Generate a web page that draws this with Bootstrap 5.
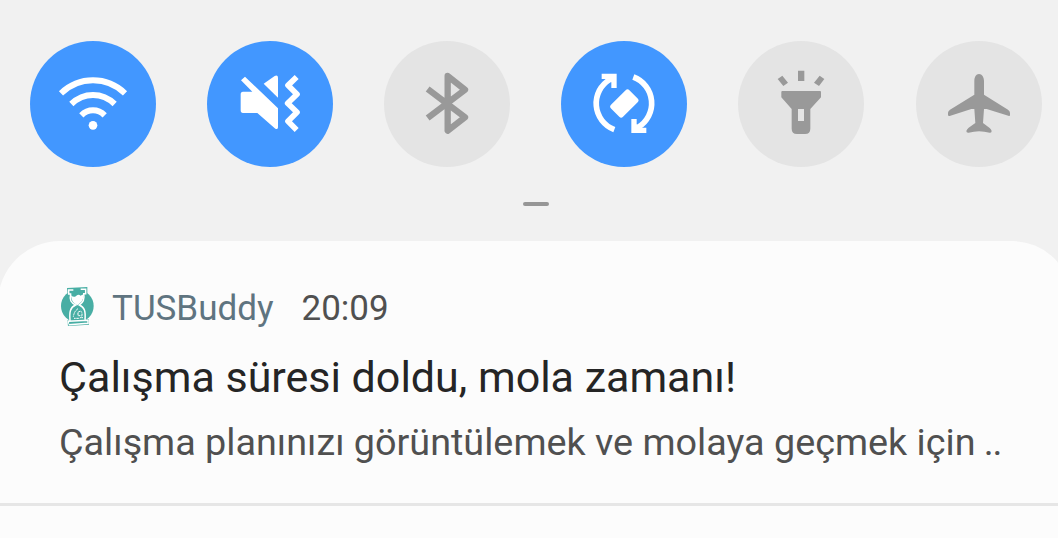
<!DOCTYPE html>
<html lang="tr">
<head>
    <meta charset="UTF-8">
    <meta name="viewport" content="width=device-width, initial-scale=1.0">
    <title>TUSBuddy</title>

    <link href="https://cdn.jsdelivr.net/npm/bootstrap@5.3.0/dist/css/bootstrap.min.css" rel="stylesheet">

    <style>
        body {
            background-color: #f1f1f1;
            font-family: Roboto, "Noto Sans", sans-serif;
            overflow: hidden;
        }
        /* the shade is a little wider than the visible area */
        .shade {
            width: 1072px;
            height: 538px;
        }
        .quick-panel {
            height: 241px;
            padding: 41px 30px 0;
        }
        .toggles {
            gap: 51px;
        }
        .toggle {
            width: 126px;
            height: 126px;
            background: #e4e4e4;
            color: #999;
        }
        .toggle.on {
            background: #4297ff;
            color: #fff;
        }
        .handle {
            width: 26px;
            height: 4px;
            margin-top: 35px;
            background: #969696;
        }
        .notice-panel {
            margin-left: -2px;
            background: #fcfcfc;
            border-radius: 62px 60px 0 0;
        }
        .notice {
            height: 265px;
            padding: 47px 60px 0 61px;
            border-bottom: 3px solid #e6e6e6;
        }
        .notice-head {
            height: 42px;
            font-size: 35px;
            line-height: 42px;
        }
        .app-icon {
            width: 36px;
            height: 39px;
            margin: 0 0 6px 1px;
        }
        .app-name {
            margin-left: 16px;
            color: #5f7480;
        }
        .app-time {
            margin-left: 28px;
            color: #505050;
        }
        .notice-title {
            margin-top: 20px;
            font-size: 43px;
            line-height: 54px;
            color: #252525;
        }
        .notice-text {
            margin-top: 14px;
            font-size: 37.75px;
            line-height: 48px;
            color: #505050;
        }
        .cut-off {
            letter-spacing: -1.2px;
        }
    </style>
</head>
<body>

    <div class="shade d-flex flex-column">

        <!-- Quick settings -->
        <div class="quick-panel d-flex flex-column align-items-center">
            <div class="toggles d-flex w-100">
                <div class="toggle on rounded-circle">
                    <svg class="d-block" viewBox="30 33 378 378" fill="none" stroke="currentColor" stroke-width="18">
                        <path d="M123 190Q164 151 219 151T315 190"/>
                        <path d="M154 222Q182 195 219 195T284 222"/>
                        <path d="M184 256Q199 241 219 241T254 256"/>
                        <circle cx="219" cy="286" r="13" fill="currentColor" stroke="none"/>
                    </svg>
                </div>
                <div class="toggle on rounded-circle">
                    <svg class="d-block" viewBox="30 33 378 378" fill="currentColor">
                        <path d="M132 151L144 140L243 235V292Q243 300 235 296L181 249H138Q131 249 131 241V193Q131 185 138 185H166Z"/>
                        <path d="M200 161L233 138Q243 134 243 144V203Z"/>
                        <path d="M299 141L273 166L300 193L272 220L300 247L273 274L299 300" fill="none" stroke="currentColor" stroke-width="17" stroke-linejoin="round"/>
                    </svg>
                </div>
                <div class="toggle rounded-circle">
                    <svg class="d-block" viewBox="30 33 378 378" fill="none" stroke="currentColor" stroke-width="19" stroke-linejoin="round">
                        <path d="M161 177L273 262L221 302V138L273 179L161 264"/>
                    </svg>
                </div>
                <div class="toggle on rounded-circle">
                    <svg class="d-block" viewBox="30 33 378 378" fill="currentColor">
                        <path d="M190 299A84 84 0 0 1 177 148M247 141A84 84 0 0 1 261 292" fill="none" stroke="currentColor" stroke-width="17"/>
                        <path d="M152 131H197V174H181V157L165 147H152Z"/>
                        <path d="M241 267H257V283L272 293H286V309H241Z"/>
                        <rect x="181" y="195" width="78" height="51" rx="8" transform="rotate(-45 220 220.500)"/>
                    </svg>
                </div>
                <div class="toggle rounded-circle">
                    <svg class="d-block" viewBox="30 33 378 378" fill="currentColor">
                        <path fill-rule="evenodd" d="M163 183H276Q279 183 279 186V202L247 237V296Q247 312 231 312H207Q191 312 191 296V237L160 202V186Q160 183 163 183ZM210 237V273H228V237Z"/>
                        <path d="M210 122H229V153H210ZM149 147L163 137L180 158L166 168ZM275 137L289 147L273 168L258 158Z"/>
                    </svg>
                </div>
                <div class="toggle rounded-circle ms-auto">
                    <svg class="d-block" viewBox="30 33 378 378" fill="currentColor">
                        <path d="M219 132C228 132 234 142 234 153V194L306 239Q312 243 312 249V255Q312 259 307 257L242 237H234L231 279L251 294Q256 298 257 303Q257 309 251 308Q219 299 188 308Q181 309 181 303Q182 298 188 293L208 279L205 237H196L131 258Q126 259 126 255V249Q126 243 132 239L205 194V153C205 142 210 132 219 132Z"/>
                    </svg>
                </div>
            </div>
            <div class="handle rounded-pill"></div>
        </div>

        <!-- Notifications -->
        <div class="notice-panel flex-grow-1">
            <div class="notice">
                <div class="notice-head d-flex align-items-center">
                    <svg class="app-icon" viewBox="30 21 108 117">
                        <g fill="#48aea4">
                            <circle cx="82" cy="78" r="49"/>
                            <path d="M51 24L112 21V46H53ZM52 121L117 118V134L54 138Z"/>
                        </g>
                        <g fill="none" stroke="#fff" stroke-width="4.500">
                            <path d="M70 30H56V42H64M92 28H107V41H99M62 42C58 61 63 68 77 75C60 82 58 96 60 121M101 41C105 60 99 68 88 75C104 82 107 94 105 119M55 131V124L114 121V130L56 134"/>
                            <path d="M84 86Q72 94 70 111M86 115H72M83 98Q95 88 96 101T86 115M84 99V107H91M94 113H99" stroke-width="3" stroke-dasharray="7 2"/>
                        </g>
                        <path fill="#fff" d="M63 46Q72 54 78 48Q87 41 91 47L101 43Q101 61 90 69L82 76L73 70Q64 63 63 46Z"/>
                    </svg>
                    <span class="app-name">TUSBuddy</span>
                    <span class="app-time">20:09</span>
                </div>
                <div class="notice-title text-nowrap">Çalışma süresi doldu, mola zamanı!</div>
                <div class="notice-text text-nowrap">Çalışma planınızı görüntülemek ve molaya geçmek için<span class="cut-off"> ..</span></div>
            </div>
        </div>

    </div>

    <script src="https://cdn.jsdelivr.net/npm/bootstrap@5.3.0/dist/js/bootstrap.bundle.min.js"></script>

</body>
</html>
